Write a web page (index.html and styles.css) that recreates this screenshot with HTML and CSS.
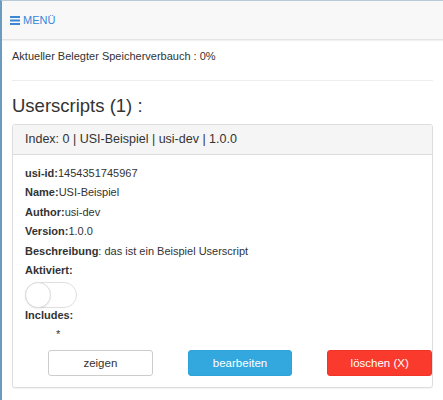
FILE: index.html
```html
<!DOCTYPE html>
<html lang="de">
<head>
<meta charset="utf-8">
<title>USI</title>
<link rel="stylesheet" href="styles.css">
</head>
<body>
<div class="frame">
  <nav class="navbar">
    <a class="menu-btn" href="#">
      <svg class="burger" width="10" height="9" viewBox="0 0 10 9"><rect x="0" y="0" width="10" height="2"/><rect x="0" y="3.5" width="10" height="2"/><rect x="0" y="7" width="10" height="2"/></svg>
      <span>MENÜ</span>
    </a>
  </nav>
  <main class="content">
    <p class="usage">Aktueller Belegter Speicherverbauch : 0%</p>
    <hr class="sep">
    <h3 class="title">Userscripts (1) :</h3>
    <section class="panel">
      <div class="panel-heading">Index: 0 | USI-Beispiel | usi-dev | 1.0.0</div>
      <div class="panel-body">
        <div class="row"><b>usi-id:</b>1454351745967</div>
        <div class="row"><b>Name:</b>USI-Beispiel</div>
        <div class="row"><b>Author:</b>usi-dev</div>
        <div class="row"><b>Version:</b>1.0.0</div>
        <div class="row"><b>Beschreibung</b>: das ist ein Beispiel Userscript</div>
        <div class="row"><b>Aktiviert:</b></div>
        <div class="toggle"><span class="knob"></span></div>
        <div class="row includes"><b>Includes:</b></div>
        <ul class="inc-list"><li>*</li></ul>
        <div class="actions">
          <button class="btn btn-default">zeigen</button>
          <button class="btn btn-info">bearbeiten</button>
          <button class="btn btn-danger">löschen (X)</button>
        </div>
      </div>
    </section>
  </main>
</div>
</body>
</html>
```

FILE: styles.css
```css
* { box-sizing: border-box; }
html, body { margin: 0; padding: 0; background: #fff; }
body {
  font-family: "Liberation Sans", Arial, sans-serif;
  color: #333;
  font-size: 11px;
}
.frame {
  min-height: 400px;
  border-left: 2px solid #6b9cc0;
  border-top: 1px solid #b9cad6;
}
.navbar {
  height: 39px;
  background: #f8f8f8;
  border-bottom: 1px solid #e3e3e3;
  box-shadow: 0 1px 1px rgba(0,0,0,0.05);
  display: flex;
  align-items: center;
  padding-left: 8px;
}
.menu-btn {
  display: flex;
  align-items: center;
  gap: 3px;
  color: #3a87d6;
  text-decoration: none;
  font-size: 11px;
}
.burger { fill: #3a87d6; }
.content { padding: 0 10px; }
.usage {
  margin: 0;
  padding-top: 9px;
  line-height: 14px;
  font-size: 11px;
}
.sep {
  border: 0;
  border-top: 1px solid #eee;
  margin: 17px 0 0 0;
}
.title {
  margin: 0;
  padding-top: 14px;
  font-weight: normal;
  font-size: 18.5px;
  line-height: 22px;
  color: #333;
}
.panel {
  margin-top: 7px;
  width: 421px;
  border: 1px solid #ddd;
  border-radius: 3px;
  box-shadow: 0 1px 1px rgba(0,0,0,0.05);
}
.panel-heading {
  height: 30px;
  background: #f5f5f5;
  border-bottom: 1px solid #ddd;
  border-radius: 3px 3px 0 0;
  padding: 0 12px;
  font-size: 12.5px;
  line-height: 29px;
}
.panel-body {
  padding: 9px 0 11px 12px;
}
.row {
  line-height: 19.4px;
  font-size: 11px;
}
.row b { font-weight: bold; }
.toggle {
  margin-top: 2px;
  width: 52px;
  height: 26px;
  border: 1px solid #dfdfdf;
  border-radius: 13px;
  background: #fff;
  position: relative;
}
.knob {
  position: absolute;
  left: -1px;
  top: -1px;
  width: 26px;
  height: 26px;
  border-radius: 50%;
  border: 1px solid #dcdcdc;
  background: #fff;
  box-shadow: 0 1px 2px rgba(0,0,0,0.08);
}
.includes { line-height: 14px; }
.inc-list {
  list-style: none;
  margin: 0;
  padding: 2px 0 0 31px;
  line-height: 20px;
}
.actions {
  display: flex;
  gap: 35px;
  margin-top: 6px;
  padding-left: 23px;
}
.btn {
  width: 105px;
  height: 26px;
  border-radius: 3px;
  font-family: "Liberation Sans", Arial, sans-serif;
  font-size: 11.5px;
  border: 1px solid #ccc;
  background: #fff;
  color: #333;
  padding: 0;
}
.btn-info {
  background: #33a8df;
  border-color: #2ea3da;
  color: #fff;
}
.btn-danger {
  background: #fb3a2e;
  border-color: #f03528;
  color: #fff;
}
```
